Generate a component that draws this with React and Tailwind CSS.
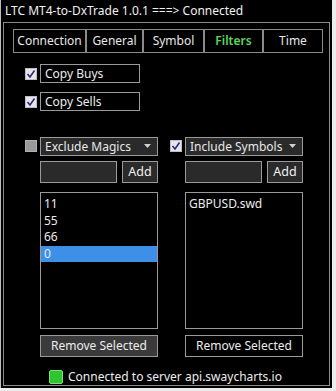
import React from "react";

function Check({ checked }) {
  return (
    <div className={"w-[12px] h-[12px] flex items-center justify-center " + (checked ? "bg-[#e6e6ea] border border-[#bdbdc8]" : "bg-[#9a9a9a] border border-[#b0b0b0]")}>
      {checked && (
        <svg width="10" height="10" viewBox="0 0 10 10">
          <path d="M1.5 5 L4 8 L8.5 1.5" fill="none" stroke="#2a2a7a" strokeWidth="1.6" />
        </svg>
      )}
    </div>
  );
}

function Select({ label }) {
  return (
    <div className="w-[118px] h-[19px] border border-[#9a9a9a] bg-[#2a2a2a] flex items-center justify-between pl-[4px] pr-[6px] text-[12px] text-[#e8e8e8]">
      <span>{label}</span>
      <svg width="7" height="5" viewBox="0 0 7 5"><path d="M0 0 L7 0 L3.5 4 Z" fill="#d0d0d0" /></svg>
    </div>
  );
}

export default function App() {
  const tabs = ["Connection", "General", "Symbol", "Filters", "Time"];
  const widths = ["w-[73px]", "w-[57px]", "w-[61px]", "w-[59px]", "w-[60px]"];
  return (
    <div className="w-[336px] h-[391px] bg-[#ececec] overflow-hidden" style={{ fontFamily: '"Noto Sans", "DejaVu Sans", sans-serif' }}>
      <div className="w-[332px] h-[388px] bg-black border-l border-[#bdbdbd] flex flex-col">
        <div className="h-[22px] flex items-center pl-[4px] text-[12px] text-[#f0f0f0] leading-none">LTC MT4-to-DxTrade 1.0.1 ===&gt; Connected</div>
        <div className="ml-[2px] w-[327px] h-[364px] border border-[#8a8a8a] flex flex-col">
          <div className="flex ml-[9px] mt-[6px]">
            {tabs.map((t, i) => (
              <div key={t} className={widths[i] + " h-[24px] border border-[#8a8a8a] flex items-center justify-center text-[12px] " + (t === "Filters" ? "text-[#5cd65c] font-semibold" : "text-[#e8e8e8]")}>{t}</div>
            ))}
          </div>
          <div className="mt-[3px] w-[317px] h-[1px] bg-[#2f5a2f]" />
          <div className="flex items-center ml-[21px] mt-[8px] gap-[3px]">
            <Check checked />
            <div className="w-[100px] h-[19px] border border-[#9a9a9a] flex items-center pl-[4px] text-[12px] text-[#ececec]">Copy Buys</div>
          </div>
          <div className="flex items-center ml-[21px] mt-[9px] gap-[3px]">
            <Check checked />
            <div className="w-[100px] h-[19px] border border-[#9a9a9a] flex items-center pl-[4px] text-[12px] text-[#ececec]">Copy Sells</div>
          </div>
          <div className="mt-[15px] w-[325px] h-[1px] bg-[#5a5a5a]" />
          <div className="flex mt-[11px] ml-[21px]">
            {[
              { label: "Exclude Magics", checked: false, items: ["11", "55", "66", "0"], sel: 3, dark: true },
              { label: "Include Symbols", checked: true, items: ["GBPUSD.swd"], sel: -1, dark: false },
            ].map((c, idx) => (
              <div key={idx} className={"flex gap-[3px] " + (idx === 1 ? "ml-[12px]" : "")}>
                <div className="pt-[3px]"><Check checked={c.checked} /></div>
                <div className="flex flex-col w-[118px]">
                  <Select label={c.label} />
                  <div className="flex justify-between mt-[5px]">
                    <div className="w-[77px] h-[22px] border border-[#9a9a9a] bg-[#2a2a2a]" />
                    <div className="w-[36px] h-[22px] border border-[#9a9a9a] bg-[#2a2a2a] flex items-center justify-center text-[12.5px] text-[#f0f0f0]">Add</div>
                  </div>
                  <div className="mt-[9px] h-[137px] border border-[#9a9a9a] bg-black flex flex-col pt-[3px] text-[12px] text-[#ececec]">
                    {c.items.map((it, j) => (
                      <div key={j} className={"h-[16.5px] flex items-center pl-[3px] " + (j === c.sel ? "bg-[#3d8fe8]" : "")}>{it}</div>
                    ))}
                  </div>
                  <div className={"mt-[6px] h-[22px] border border-[#9a9a9a] flex items-center justify-center text-[12px] text-[#ececec] " + (c.dark ? "bg-[#3a3a3a]" : "bg-black")}>Remove Selected</div>
                </div>
              </div>
            ))}
          </div>
          <div className="mt-[6px] w-[325px] h-[1px] bg-[#3a4a3a]" />
          <div className="flex items-center ml-[45px] mt-[5px] gap-[5px]">
            <div className="w-[14px] h-[14px] bg-[#2fc52f] border border-[#7ade7a] rounded-[2px]" />
            <span className="text-[12px] text-[#ececec]">Connected to server api.swaycharts.io</span>
          </div>
        </div>
      </div>
    </div>
  );
}
